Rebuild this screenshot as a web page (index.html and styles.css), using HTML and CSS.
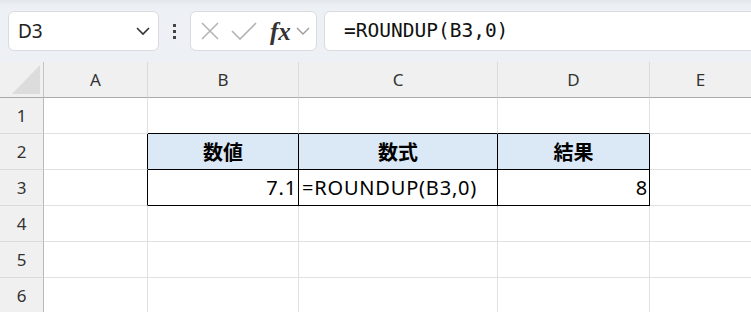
FILE: index.html
```html
<!DOCTYPE html>
<html lang="ja">
<head>
    <meta charset="UTF-8">
    <title>ROUNDUP</title>
    <link rel="stylesheet" href="styles.css">
</head>
<body>

<div class="toolbar">
    <div class="namebox">
        <span class="name">D3</span>
        <svg class="chev" width="16" height="10" viewBox="0 0 16 10"><path d="M2 2 L8 8 L14 2" fill="none" stroke="#333" stroke-width="1.6"/></svg>
    </div>
    <div class="dots"><i></i><i></i><i></i></div>
    <div class="tools">
        <svg width="20" height="20" viewBox="0 0 20 20"><path d="M2 2 L18 18 M18 2 L2 18" stroke="#b4b4b4" stroke-width="1.6"/></svg>
        <svg width="28" height="20" viewBox="0 0 28 20"><path d="M2 10 L10 18 L26 2" fill="none" stroke="#b4b4b4" stroke-width="1.6"/></svg>
        <span class="fx">fx</span>
        <svg width="14" height="10" viewBox="0 0 14 10"><path d="M1 2 L7 8 L13 2" fill="none" stroke="#9a9a9a" stroke-width="1.4"/></svg>
    </div>
    <div class="formula">=ROUNDUP(B3,0)</div>
</div>

<div class="sheet">
    <div class="corner"><svg width="43" height="35" viewBox="0 0 43 35"><polygon points="40,3 40,32 12,32" fill="#dcdcdc"/></svg></div>
    <div class="colhead">A</div>
    <div class="colhead">B</div>
    <div class="colhead">C</div>
    <div class="colhead">D</div>
    <div class="colhead last">E</div>

    <div class="rowhead">1</div>
    <div class="cell"></div>
    <div class="cell above"></div>
    <div class="cell above"></div>
    <div class="cell above"></div>
    <div class="cell last"></div>

    <div class="rowhead">2</div>
    <div class="cell before"></div>
    <div class="cell th">数値</div>
    <div class="cell th">数式</div>
    <div class="cell th">結果</div>
    <div class="cell last"></div>

    <div class="rowhead">3</div>
    <div class="cell before"></div>
    <div class="cell td num">7.1</div>
    <div class="cell td">=ROUNDUP(B3,0)</div>
    <div class="cell td num">8</div>
    <div class="cell last"></div>

    <div class="rowhead">4</div>
    <div class="cell"></div>
    <div class="cell"></div>
    <div class="cell"></div>
    <div class="cell"></div>
    <div class="cell last"></div>

    <div class="rowhead">5</div>
    <div class="cell"></div>
    <div class="cell"></div>
    <div class="cell"></div>
    <div class="cell"></div>
    <div class="cell last"></div>

    <div class="rowhead">6</div>
    <div class="cell"></div>
    <div class="cell"></div>
    <div class="cell"></div>
    <div class="cell"></div>
    <div class="cell last"></div>
</div>

</body>
</html>
```

FILE: styles.css
```css
/* Page */
body {
    margin: 0;
    width: 751px;
    height: 312px;
    overflow: hidden;
    background-color: #fff;
    font-family: 'Noto Sans', sans-serif;
}

/* Top bar with name box and formula bar */
.toolbar {
    display: flex;
    align-items: center;
    height: 62px;
    padding: 0 0 0 8px;
    box-sizing: border-box;
    background: linear-gradient(#e3e6ea, #edf0f4 6px, #edf0f4);
}

.namebox {
    display: flex;
    align-items: center;
    justify-content: space-between;
    width: 151px;
    height: 40px;
    box-sizing: border-box;
    padding: 0 7px 0 9px;
    background-color: #fff;
    border: 1px solid #d9dbde;
    border-radius: 6px;
}

.name {
    font-size: 19px;
    color: #222;
}

.dots {
    display: flex;
    flex-direction: column;
    gap: 3px;
    width: 31px;
    align-items: center;
}

.dots i {
    width: 3px;
    height: 3px;
    background-color: #444;
}

.tools {
    display: flex;
    align-items: center;
    gap: 12px;
    width: 127px;
    height: 40px;
    box-sizing: border-box;
    padding: 0 4px 0 9px;
    background-color: #fff;
    border: 1px solid #d9dbde;
    border-radius: 6px;
}

.tools svg:nth-child(2) {
    margin-left: -2px;
}

.fx {
    font-family: 'Liberation Serif', serif;
    font-style: italic;
    font-weight: bold;
    font-size: 25px;
    line-height: 1;
    color: #333;
    margin-right: -7px;
}

.formula {
    flex: 1;
    margin-left: 7px;
    margin-right: -10px;
    height: 40px;
    box-sizing: border-box;
    padding: 0 0 0 19px;
    line-height: 38px;
    background-color: #fff;
    border: 1px solid #d9dbde;
    border-radius: 6px;
    font-family: 'DejaVu Sans Mono', monospace;
    font-size: 19.5px;
    color: #111;
}

/* Grid of cells */
.sheet {
    display: grid;
    grid-template-columns: 44px 104px 151px 199px 152px 1fr;
    grid-template-rows: 36px repeat(6, 36px);
}

.corner,
.colhead {
    background-color: #f0f0f0;
    border-bottom: 1px solid #a9a9a9;
}

.corner {
    border-right: 1px solid #c4c4c4;
}

.corner svg {
    display: block;
}

.colhead {
    display: flex;
    align-items: center;
    justify-content: center;
    border-right: 1px solid #dadada;
    font-size: 17px;
    color: #333;
}

.rowhead {
    display: flex;
    align-items: center;
    justify-content: center;
    background-color: #f0f0f0;
    border-right: 1px solid #b9b9b9;
    border-bottom: 1px solid #dadada;
    font-size: 17px;
    color: #333;
}

.cell {
    border-right: 1px solid #e1e1e1;
    border-bottom: 1px solid #e1e1e1;
    font-family: 'Noto Sans', 'Noto Sans CJK JP', sans-serif;
    font-size: 20px;
    color: #000;
    display: flex;
    align-items: center;
    padding: 0 3px;
    overflow: hidden;
    white-space: nowrap;
}

.last {
    border-right: none;
}

/* Bordered table B2:D3 */
.above {
    border-bottom-color: #000;
}

.before {
    border-right-color: #000;
}

.th,
.td {
    border-right-color: #000;
    border-bottom-color: #000;
}

.th {
    justify-content: center;
    background-color: #dbe8f6;
    font-family: 'Noto Sans CJK JP', sans-serif;
    font-weight: bold;
}

.td {
    letter-spacing: 0.8px;
}

.num {
    justify-content: flex-end;
    padding-right: 1px;
}
```
